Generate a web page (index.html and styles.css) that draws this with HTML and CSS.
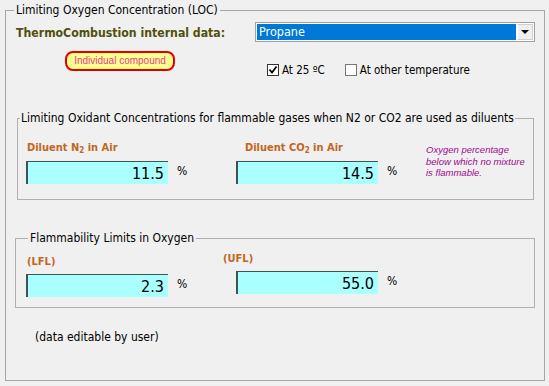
FILE: index.html
```html
<!DOCTYPE html>
<html lang="en">
<head>
    <meta charset="UTF-8">
    <meta name="viewport" content="width=device-width, initial-scale=1.0">
    <title>Limiting Oxygen Concentration (LOC)</title>
    <link rel="stylesheet" href="styles.css">
</head>
<body>
<fieldset class="group outer">
    <legend>Limiting Oxygen Concentration (LOC)</legend>

    <div class="data-row">
        <span class="data-title">ThermoCombustion internal data:</span>
        <div class="combo">
            <span class="combo-value">Propane</span>
            <span class="combo-btn"><span class="combo-arrow"></span></span>
        </div>
    </div>

    <div class="option-row">
        <div class="compound-pill">Individual compound</div>
        <div class="options">
            <label class="check">
                <span class="check-box">
                    <svg width="10" height="10" viewBox="0 0 10 10"><path d="M1.5 4.5 L4 7.5 L8.5 1.5" fill="none" stroke="#000" stroke-width="1.8"/></svg>
                </span>
                At 25 ºC
            </label>
            <label class="check">
                <span class="check-box off"></span>
                At other temperature
            </label>
        </div>
    </div>

    <fieldset class="group inner loc">
        <legend>Limiting Oxidant Concentrations for flammable gases when N2 or CO2 are used as diluents</legend>
        <div class="field-row">
            <div class="field">
                <div class="field-label">Diluent N<sub>2</sub> in Air</div>
                <div class="field-line">
                    <div class="value-box">11.5</div>
                    <span class="unit">%</span>
                </div>
            </div>
            <div class="field second">
                <div class="field-label">Diluent CO<sub>2</sub> in Air</div>
                <div class="field-line">
                    <div class="value-box">14.5</div>
                    <span class="unit">%</span>
                </div>
            </div>
            <p class="note">Oxygen percentage<br>below which no mixture<br>is flammable.</p>
        </div>
    </fieldset>

    <fieldset class="group inner flam">
        <legend>Flammability Limits in Oxygen</legend>
        <div class="field-row">
            <div class="field low">
                <div class="field-label">(LFL)</div>
                <div class="field-line">
                    <div class="value-box">2.3</div>
                    <span class="unit">%</span>
                </div>
            </div>
            <div class="field second">
                <div class="field-label">(UFL)</div>
                <div class="field-line">
                    <div class="value-box">55.0</div>
                    <span class="unit">%</span>
                </div>
            </div>
        </div>
    </fieldset>

    <p class="editable">(data editable by user)</p>
</fieldset>
</body>
</html>
```

FILE: styles.css
```css
* {
    margin: 0;
    padding: 0;
    box-sizing: border-box;
}

body {
    font-family: 'DejaVu Sans Condensed', 'DejaVu Sans', sans-serif;
    font-size: 12px;
    color: #000;
    background: #f0f0f0;
    padding: 2px 4px 0 5px;
    height: 386px;
    overflow: hidden;
}

/* group boxes */
.group {
    border: 1px solid #a6a6a6;
    min-width: 0;
}

.group legend {
    font-size: 12px;
    line-height: 16px;
    padding: 0 2px;
    white-space: nowrap;
}

.outer {
    height: 379px;
}

.outer > legend {
    margin-left: 8px;
}

.inner {
    border-color: #b0b0b0;
}

/* header row */
.data-row {
    display: flex;
    align-items: center;
    justify-content: space-between;
    margin-top: 4px;
    padding: 0 9px 0 10px;
}

.data-title {
    font-weight: bold;
    font-size: 12.2px;
    color: #50500c;
    padding-top: 2px;
}

.combo {
    width: 280px;
    height: 20px;
    display: flex;
    border: 1px solid #a0a0a0;
    background: #fff;
    padding: 1px;
}

.combo-value {
    flex: 1;
    background: #0078d7;
    color: #fff;
    font-size: 12.5px;
    line-height: 16px;
    padding-left: 2px;
}

.combo-btn {
    width: 16px;
    margin-left: 1px;
    background: #f0f0f0;
    border: 1px solid #cfcfcf;
    border-left-color: #fff;
    display: flex;
    align-items: center;
    justify-content: center;
}

.combo-arrow {
    width: 0;
    height: 0;
    border-left: 4px solid transparent;
    border-right: 4px solid transparent;
    border-top: 4px solid #000;
}

/* compound + temperature options */
.option-row {
    display: flex;
    align-items: flex-start;
}

.compound-pill {
    width: 110px;
    height: 20px;
    margin: 9px 0 0 59px;
    border: 2px solid #e00000;
    border-radius: 8px;
    background: #ffff8c;
    color: #e0409c;
    font-family: 'Liberation Sans', sans-serif;
    font-size: 10px;
    line-height: 16px;
    text-align: center;
}

.options {
    display: flex;
    gap: 20px;
    margin: 22px 0 0 92px;
}

.check {
    display: flex;
    align-items: center;
    gap: 3px;
    font-size: 11.5px;
    line-height: 12px;
}

.check-box {
    width: 12px;
    height: 12px;
    border: 1px solid #333;
    background: #fff;
    display: flex;
    align-items: center;
    justify-content: center;
}

.check-box.off {
    border-color: #777;
}

/* value fields */
.loc {
    margin: 34px 10px 0 11px;
    padding-bottom: 15px;
}

.loc > legend {
    margin-left: 2px;
    padding: 0 1px;
}

.flam {
    margin: 30px 9px 0 9px;
    padding-bottom: 10px;
}

.flam > legend {
    margin-left: 12px;
}

.field-row {
    display: flex;
    align-items: flex-start;
}

.loc .field-row {
    padding: 15px 0 0 8px;
}

.flam .field-row {
    padding: 6px 0 0 10px;
}

.field {
    width: 210px;
}

.field-label {
    font-weight: bold;
    font-size: 11px;
    line-height: 13px;
    color: #c0671e;
    padding-left: 1px;
    margin-bottom: 7px;
}

.field-label sub {
    font-size: 8px;
    vertical-align: -2px;
    line-height: 0;
}

.loc .second .field-label {
    padding-left: 9px;
}

.flam .field-label {
    margin-bottom: 6px;
}

.flam .second .field-label {
    margin-left: -7px;
}

.field.low {
    margin-top: 3px;
}

.flam .field.low {
    width: 203px;
}

.field-line {
    display: flex;
    align-items: flex-start;
}

.value-box {
    width: 142px;
    height: 23px;
    background: #aaffff;
    border-top: 1px solid #3b5555;
    border-left: 2px solid #3b5555;
    font-size: 16px;
    line-height: 21px;
    padding: 1px 4px 0 0;
    text-align: right;
}

.flam .second .value-box {
    margin-left: 7px;
}

.unit {
    margin: 3px 0 0 9px;
    font-size: 12px;
}

.note {
    margin: 3px 0 0 -20px;
    font-family: 'Liberation Sans', sans-serif;
    font-size: 9.5px;
    line-height: 11.5px;
    font-style: italic;
    color: #a0088e;
}

.editable {
    margin: 22px 0 0 29px;
    font-size: 12px;
}
```
